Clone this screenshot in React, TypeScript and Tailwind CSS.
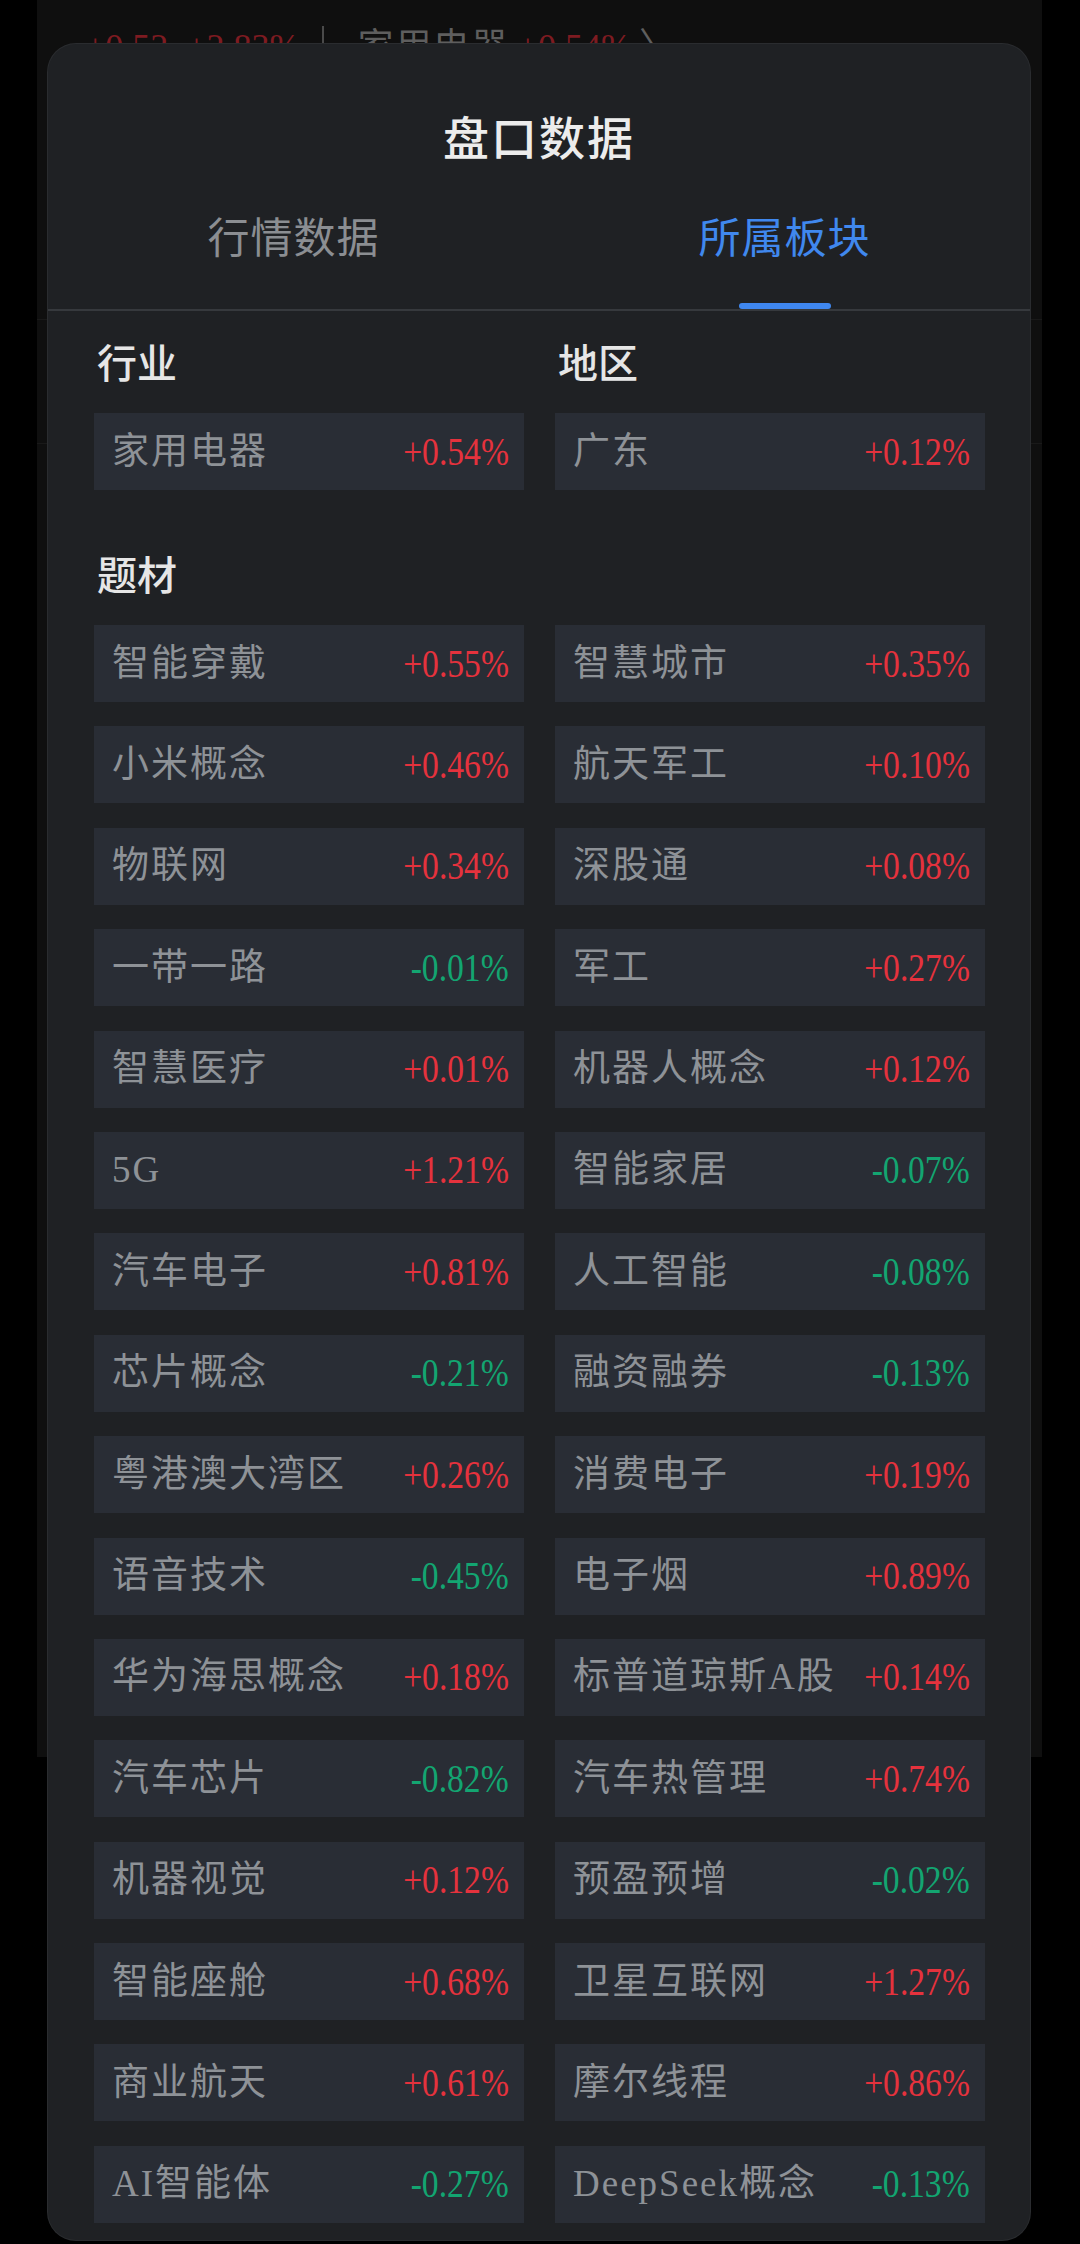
import React from "react";

type Plate = { name: string; change: string };

const industry: Plate = { name: "家用电器", change: "+0.54%" };
const region: Plate = { name: "广东", change: "+0.12%" };

const themes: Plate[] = [
  { name: "智能穿戴", change: "+0.55%" },
  { name: "智慧城市", change: "+0.35%" },
  { name: "小米概念", change: "+0.46%" },
  { name: "航天军工", change: "+0.10%" },
  { name: "物联网", change: "+0.34%" },
  { name: "深股通", change: "+0.08%" },
  { name: "一带一路", change: "-0.01%" },
  { name: "军工", change: "+0.27%" },
  { name: "智慧医疗", change: "+0.01%" },
  { name: "机器人概念", change: "+0.12%" },
  { name: "5G", change: "+1.21%" },
  { name: "智能家居", change: "-0.07%" },
  { name: "汽车电子", change: "+0.81%" },
  { name: "人工智能", change: "-0.08%" },
  { name: "芯片概念", change: "-0.21%" },
  { name: "融资融券", change: "-0.13%" },
  { name: "粤港澳大湾区", change: "+0.26%" },
  { name: "消费电子", change: "+0.19%" },
  { name: "语音技术", change: "-0.45%" },
  { name: "电子烟", change: "+0.89%" },
  { name: "华为海思概念", change: "+0.18%" },
  { name: "标普道琼斯A股", change: "+0.14%" },
  { name: "汽车芯片", change: "-0.82%" },
  { name: "汽车热管理", change: "+0.74%" },
  { name: "机器视觉", change: "+0.12%" },
  { name: "预盈预增", change: "-0.02%" },
  { name: "智能座舱", change: "+0.68%" },
  { name: "卫星互联网", change: "+1.27%" },
  { name: "商业航天", change: "+0.61%" },
  { name: "摩尔线程", change: "+0.86%" },
  { name: "AI智能体", change: "-0.27%" },
  { name: "DeepSeek概念", change: "-0.13%" },
];

const cjk = "font-['Liberation_Serif','Noto_Sans_CJK_SC',serif]";

function PlateCard({ plate }: { plate: Plate }) {
  const down = plate.change.startsWith("-");
  return (
    <div className="h-[77px] bg-[#292d35] flex items-center justify-between pl-[18px] pr-[15px]">
      <span className={`${cjk} text-[37px] leading-[40px] tracking-[2px] text-[#8e9297] whitespace-nowrap`}>
        {plate.name}
      </span>
      <span
        className={`font-['Liberation_Serif',serif] text-[40px] leading-[40px] scale-x-[0.84] origin-right whitespace-nowrap ${
          down ? "text-[#13a571]" : "text-[#e5323d]"
        }`}
      >
        {plate.change}
      </span>
    </div>
  );
}

function SectionTitle({ children }: { children: React.ReactNode }) {
  return (
    <div className={`${cjk} text-[40px] leading-[40px] text-[#e6e6e6] font-medium pl-[3px]`}>{children}</div>
  );
}

export default function App() {
  return (
    <div className="relative w-[1080px] h-[2244px] bg-black overflow-hidden">
      {/* page behind the sheet */}
      <div className="ml-[37px] w-[1005px] h-[1757px] bg-[#0f0f0f]">
        <div className={`${cjk} flex items-start pt-[29px] pl-[48px] text-[36px] leading-[36px]`}>
          <span className="font-['Liberation_Serif',serif] text-[#7e1b21] whitespace-nowrap">+0.52&nbsp;&nbsp;+2.83%</span>
          <span className="ml-[22px] mt-[-3px] w-[2px] h-[20px] bg-[#4a4a4a]" />
          <span className="ml-[34px] text-[#5e5e5e] tracking-[2px]">家用电器</span>
          <span className="ml-[8px] font-['Liberation_Serif',serif] text-[#7e1b21]">+0.54%</span>
          <span className="ml-[8px] text-[#5e5e5e]">〉</span>
        </div>
        <div className="mt-[254px] h-px bg-[#191919]" />
        <div className="mt-[123px] h-px bg-[#191919]" />
      </div>

      {/* bottom sheet */}
      <div className="absolute left-[48px] top-[44px] w-[982px] h-[2196px] bg-[#1f2124] rounded-[28px] ring-1 ring-[#2a2c2f] overflow-hidden">
        <div className={`${cjk} pt-[73px] text-center text-[46px] leading-[46px] text-[#ececec] font-medium tracking-[2px]`}>
          盘口数据
        </div>

        <div className="grid grid-cols-2 mt-[55px]">
          <div className="flex flex-col items-center">
            <span className={`${cjk} text-[42px] leading-[42px] text-[#8b8e92] tracking-[1px]`}>行情数据</span>
            <span className="mt-[43px] h-[6px] w-[92px]" />
          </div>
          <div className="flex flex-col items-center">
            <span className={`${cjk} text-[42px] leading-[42px] text-[#4088ee] tracking-[1px]`}>所属板块</span>
            <span className="mt-[43px] h-[6px] w-[92px] rounded-full bg-[#3f87ef]" />
          </div>
        </div>
        <div className="h-[2px] bg-[#36393d]" />

        <div className="pl-[46px] pr-[45px]">
          <div className="grid grid-cols-2 gap-x-[31px] mt-[34px]">
            <div>
              <SectionTitle>行业</SectionTitle>
              <div className="mt-[28px]">
                <PlateCard plate={industry} />
              </div>
            </div>
            <div>
              <SectionTitle>地区</SectionTitle>
              <div className="mt-[28px]">
                <PlateCard plate={region} />
              </div>
            </div>
          </div>

          <div className="mt-[67px]">
            <SectionTitle>题材</SectionTitle>
          </div>
          <div className="grid grid-cols-2 gap-x-[31px] gap-y-[24.4px] mt-[28px]">
            {themes.map((p) => (
              <PlateCard key={p.name} plate={p} />
            ))}
          </div>
        </div>
      </div>
    </div>
  );
}
